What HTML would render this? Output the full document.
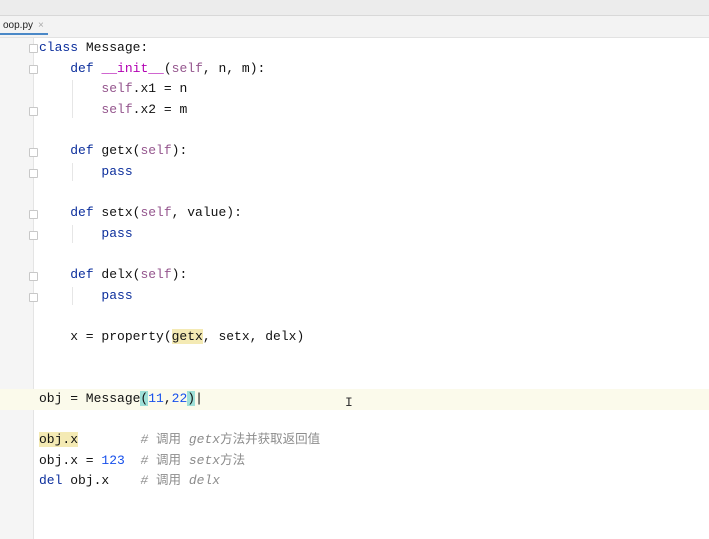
<!DOCTYPE html>
<html><head><meta charset="utf-8"><style>
body{margin:0;width:709px;height:539px;overflow:hidden;background:#fff;position:relative;font-family:"Liberation Mono",monospace}
.top{position:absolute;left:0;top:0;width:709px;height:15px;background:#ececec;border-bottom:1px solid #d8d8d8}
.tabs{position:absolute;left:0;top:16px;width:709px;height:21px;background:#f3f3f3;border-bottom:1px solid #e2e2e2}
.tab{position:absolute;left:0;top:0;width:48px;height:19px;border-bottom:2px solid #4a88c7;font:10px "Liberation Sans",sans-serif;color:#222;line-height:20px;padding-left:3px;box-sizing:border-box}
.tab span{color:#aaa;margin-left:5px}
.gutter{position:absolute;left:0;top:38px;width:33px;height:501px;background:#f5f5f5;border-right:1px solid #e4e4e4}
.hl{position:absolute;left:0;top:389px;width:709px;height:21px;background:#fbfaeb}
.code{position:absolute;left:39px;top:38px;font-size:13px;color:#111;white-space:pre}
.code div{height:20.65px;line-height:20.65px;overflow:visible}
.k{color:#0b2e9c}.s{color:#94558d}.n{color:#1750eb}.c{color:#8c8c8c;font-style:italic}
.cj{font-style:normal;font-family:"Noto Sans CJK SC",sans-serif;line-height:1;font-size:12.5px}
.b{background:#9ee0d8}.y{background:#f4eab4}
.guide{position:absolute;width:1px;background:#e6e6e6}
.fold{position:absolute;left:29px;width:7px;height:7px;border:1px solid #c8c8c8;border-radius:1px;background:#fff}
</style></head><body>
<div class="top"></div>
<div class="tabs"><div class="tab">oop.py<span>×</span></div></div>
<div class="gutter"></div>
<div class="hl"></div>
<div class="guide" style="left:72px;top:80px;height:38px"></div>
<div class="guide" style="left:72px;top:163px;height:18px"></div>
<div class="guide" style="left:72px;top:225px;height:18px"></div>
<div class="guide" style="left:72px;top:287px;height:18px"></div>
<div class="fold" style="top:44px"></div>
<div class="fold" style="top:65px"></div>
<div class="fold" style="top:107px"></div>
<div class="fold" style="top:148px"></div>
<div class="fold" style="top:169px"></div>
<div class="fold" style="top:210px"></div>
<div class="fold" style="top:231px"></div>
<div class="fold" style="top:272px"></div>
<div class="fold" style="top:293px"></div>
<div class="code"><div><span class="k">class</span> Message:</div><div>    <span class="k">def</span> <span style="color:#b200b2">__init__</span>(<span class="s">self</span>, n, m):</div><div>        <span class="s">self</span>.x1 = n</div><div>        <span class="s">self</span>.x2 = m</div><div> </div><div>    <span class="k">def</span> getx(<span class="s">self</span>):</div><div>        <span class="k">pass</span></div><div> </div><div>    <span class="k">def</span> setx(<span class="s">self</span>, value):</div><div>        <span class="k">pass</span></div><div> </div><div>    <span class="k">def</span> delx(<span class="s">self</span>):</div><div>        <span class="k">pass</span></div><div> </div><div>    x = property(<span class="y">getx</span>, setx, delx)</div><div> </div><div> </div><div>obj = Message<span class="b">(</span><span class="n">11</span>,<span class="n">22</span><span class="b">)</span>|</div><div> </div><div><span class="y">obj.x</span>        <span class="c"># <span class="cj">调用</span> getx<span class="cj">方法并获取返回值</span></span></div><div>obj.x = <span class="n">123</span>  <span class="c"># <span class="cj">调用</span> setx<span class="cj">方法</span></span></div><div><span class="k">del</span> obj.x    <span class="c"># <span class="cj">调用</span> delx</span></div></div>
<div style="position:absolute;left:345px;top:395px;font:13px 'Liberation Mono',monospace;color:#333">I</div>
</body></html>
